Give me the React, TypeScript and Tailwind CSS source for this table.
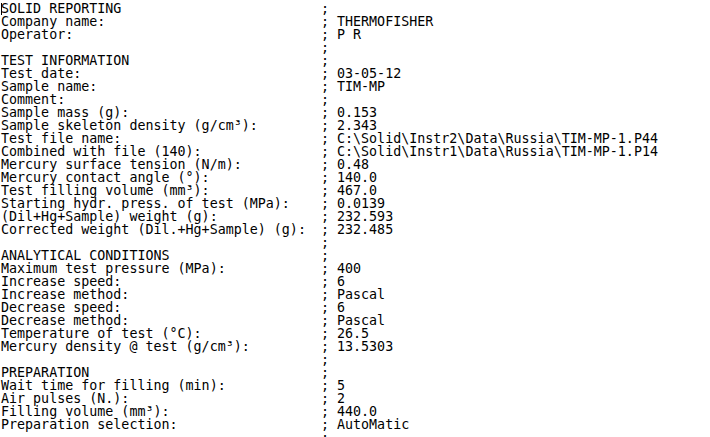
import React from "react";

type Row = [string, string] | null;

const rows: Row[] = [
  ["SOLID REPORTING", ""],
  ["Company name:", "THERMOFISHER"],
  ["Operator:", "P R"],
  ["", ""],
  ["TEST INFORMATION", ""],
  ["Test date:", "03-05-12"],
  ["Sample name:", "TIM-MP"],
  ["Comment:", ""],
  ["Sample mass (g):", "0.153"],
  ["Sample skeleton density (g/cm³):", "2.343"],
  ["Test file name:", "C:\\Solid\\Instr2\\Data\\Russia\\TIM-MP-1.P44"],
  ["Combined with file (140):", "C:\\Solid\\Instr1\\Data\\Russia\\TIM-MP-1.P14"],
  ["Mercury surface tension (N/m):", "0.48"],
  ["Mercury contact angle (°):", "140.0"],
  ["Test filling volume (mm³):", "467.0"],
  ["Starting hydr. press. of test (MPa):", "0.0139"],
  ["(Dil+Hg+Sample) weight (g):", "232.593"],
  ["Corrected weight (Dil.+Hg+Sample) (g):", "232.485"],
  ["", ""],
  ["ANALYTICAL CONDITIONS", ""],
  ["Maximum test pressure (MPa):", "400"],
  ["Increase speed:", "6"],
  ["Increase method:", "Pascal"],
  ["Decrease speed:", "6"],
  ["Decrease method:", "Pascal"],
  ["Temperature of test (°C):", "26.5"],
  ["Mercury density @ test (g/cm³):", "13.5303"],
  ["", ""],
  ["PREPARATION", ""],
  ["Wait time for filling (min):", "5"],
  ["Air pulses (N.):", "2"],
  ["Filling volume (mm³):", "440.0"],
  ["Preparation selection:", "AutoMatic"],
  ["", ""],
];

export default function App() {
  return (
    <div className="relative w-[710px] h-[437px] overflow-hidden bg-white text-black">
      <span className="absolute left-[1px] top-[3px] w-px h-[12px] bg-black" />
      <div
        className="flex flex-col pt-[2px] pl-[1px] text-[13.33px] leading-[13px] whitespace-pre"
        style={{ fontFamily: '"DejaVu Sans Mono", "Liberation Mono", monospace' }}
      >
        {rows.map((r, i) => (
          <div key={i} className="flex h-[13px]">
            <span className="w-[320px] shrink-0">{r ? r[0] : ""}</span>
            <span className="w-[16px] shrink-0">;</span>
            <span>{r ? r[1] : ""}</span>
          </div>
        ))}
      </div>
    </div>
  );
}
